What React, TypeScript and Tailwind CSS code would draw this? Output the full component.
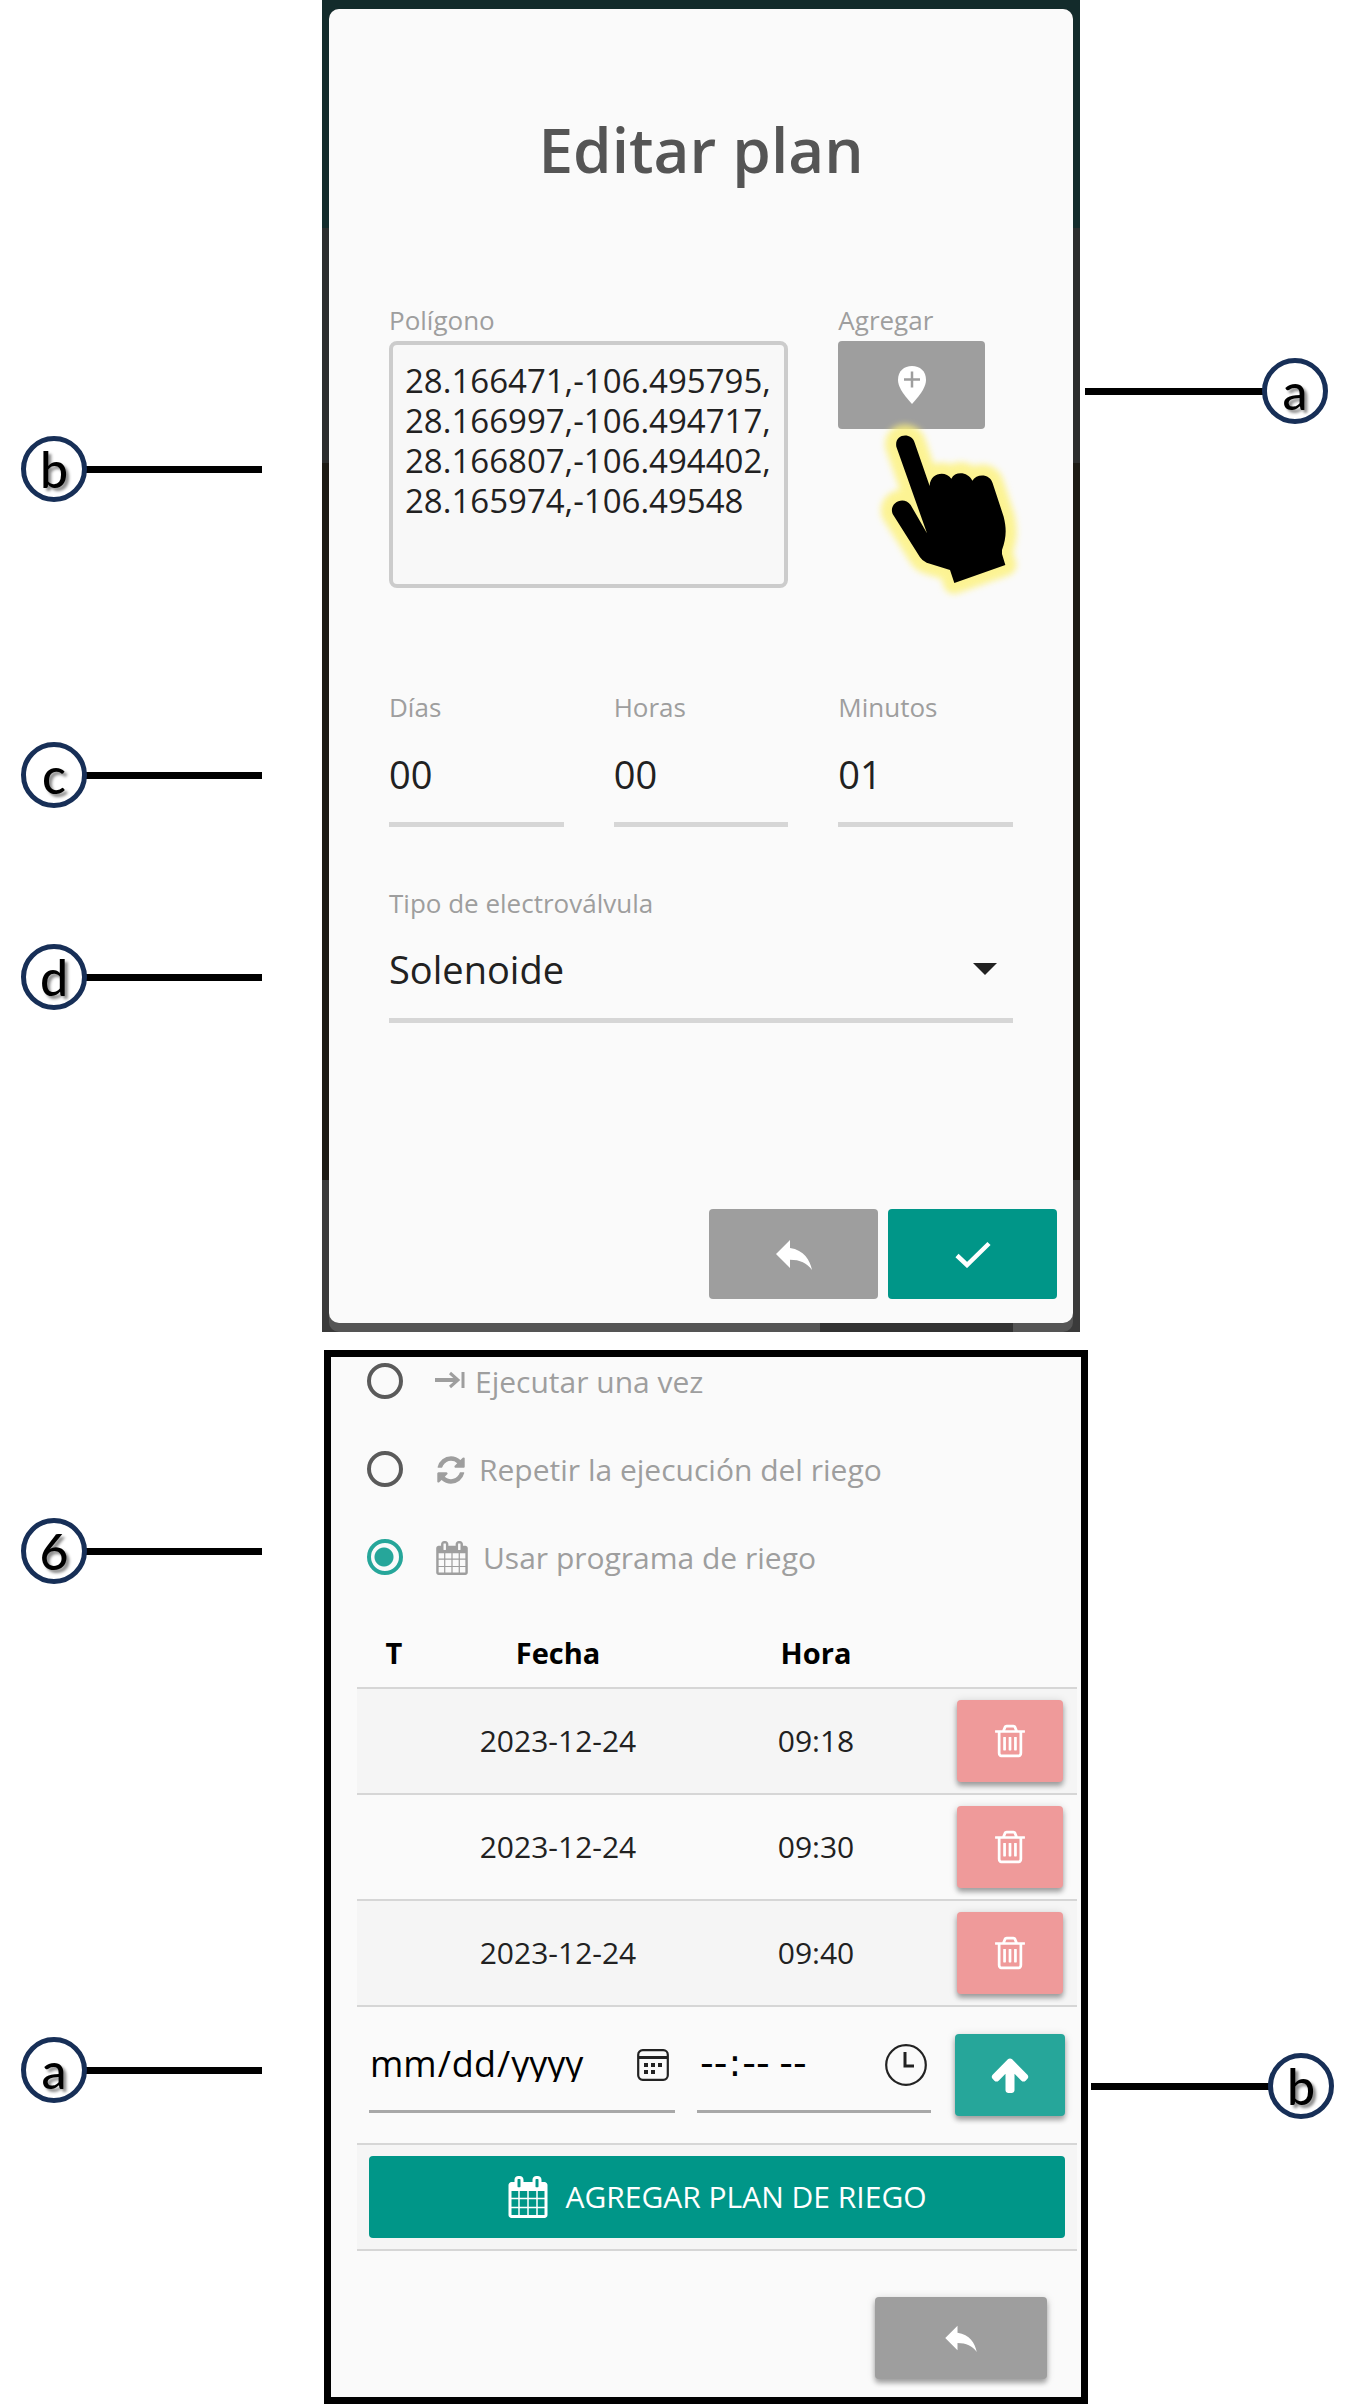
import React from "react";
import { MdReply } from "react-icons/md";

type IconProps = { className?: string };

function CalendarIcon({ className }: IconProps) {
  return (
    <svg viewBox="0 0 1792 1792" fill="currentColor" className={className} aria-hidden="true">
      <path d="M192 1664h288v-288h-288v288zm352 0h320v-288h-320v288zm-352-352h288v-320h-288v320zm352 0h320v-320h-320v320zm-352-384h288v-288h-288v288zm736 736h320v-288h-320v288zm-384-736h320v-288h-320v288zm768 736h288v-288h-288v288zm-384-352h320v-320h-320v320zm-352-864v-288q0-13-9.5-22.5t-22.5-9.5h-64q-13 0-22.5 9.5t-9.5 22.5v288q0 13 9.5 22.5t22.5 9.5h64q13 0 22.5-9.5t9.5-22.5zm736 864h288v-320h-288v320zm-384-384h320v-288h-320v288zm384 0h288v-288h-288v288zm32-480v-288q0-13-9.5-22.5t-22.5-9.5h-64q-13 0-22.5 9.5t-9.5 22.5v288q0 13 9.5 22.5t22.5 9.5h64q13 0 22.5-9.5t9.5-22.5zm384-64v1280q0 52-38 90t-90 38h-1408q-52 0-90-38t-38-90v-1280q0-52 38-90t90-38h128v-96q0-66 47-113t113-47h64q66 0 113 47t47 113v96h384v-96q0-66 47-113t113-47h64q66 0 113 47t47 113v96h128q52 0 90 38t38 90z" />
    </svg>
  );
}

function TrashIcon({ className }: IconProps) {
  return (
    <svg viewBox="0 0 1792 1792" fill="currentColor" className={className} aria-hidden="true">
      <path d="M704 736v576q0 14-9 23t-23 9h-64q-14 0-23-9t-9-23v-576q0-14 9-23t23-9h64q14 0 23 9t9 23zm256 0v576q0 14-9 23t-23 9h-64q-14 0-23-9t-9-23v-576q0-14 9-23t23-9h64q14 0 23 9t9 23zm256 0v576q0 14-9 23t-23 9h-64q-14 0-23-9t-9-23v-576q0-14 9-23t23-9h64q14 0 23 9t9 23zm128 724v-948h-896v948q0 22 7 40.5t14.5 27 10.5 8.5h832q3 0 10.5-8.5t14.5-27 7-40.5zm-672-1076h448l-48-117q-7-9-17-11h-317q-10 2-17 11zm928 32v64q0 14-9 23t-23 9h-96v948q0 83-47 143.5t-113 60.5h-832q-66 0-113-58.5t-47-141.5v-952h-96q-14 0-23-9t-9-23v-64q0-14 9-23t23-9h309l70-167q15-37 54-63t79-26h320q40 0 79 26t54 63l70 167h309q14 0 23 9t9 23z" />
    </svg>
  );
}

function RefreshIcon({ className }: IconProps) {
  return (
    <svg viewBox="0 0 1792 1792" fill="currentColor" className={className} aria-hidden="true">
      <path d="M1639 1056q0 5-1 7-64 268-268 434.5t-478 166.5q-146 0-282.5-55t-243.5-157l-129 129q-19 19-45 19t-45-19-19-45v-448q0-26 19-45t45-19h448q26 0 45 19t19 45-19 45l-137 137q71 66 161 102t187 36q134 0 250-65t186-179q11-17 53-117 8-23 30-23h192q13 0 22.5 9.5t9.5 22.5zm25-800v448q0 26-19 45t-45 19h-448q-26 0-45-19t-19-45 19-45l138-138q-148-137-349-137-134 0-250 65t-186 179q-11 17-53 117-8 23-30 23h-199q-13 0-22.5-9.5t-9.5-22.5v-7q65-268 270-434.5t480-166.5q146 0 284 55.5t245 156.5l130-129q19-19 45-19t45 19 19 45z" />
    </svg>
  );
}

function ArrowUpIcon({ className }: IconProps) {
  return (
    <svg viewBox="0 0 1792 1792" fill="currentColor" className={className} aria-hidden="true">
      <path d="M1675 971q0 51-37 90l-75 75q-38 38-91 38-54 0-90-38l-294-293v704q0 52-37.5 84.5t-90.5 32.5h-128q-53 0-90.5-32.5t-37.5-84.5v-704l-294 293q-36 38-90 38t-90-38l-75-75q-38-38-38-90 0-53 38-91l651-651q35-37 90-37 54 0 91 37l651 651q37 39 37 91z" />
    </svg>
  );
}

function ArrowToBarIcon({ className }: IconProps) {
  return (
    <svg viewBox="0 0 30 18" fill="none" stroke="currentColor" className={className} aria-hidden="true">
      <path d="M0 9h22" strokeWidth="4" />
      <path d="M15 2l8 7-8 7" strokeWidth="3" />
      <path d="M28 1v16" strokeWidth="3" />
    </svg>
  );
}

function CheckIcon({ className }: IconProps) {
  return (
    <svg viewBox="0 0 36 27" fill="none" stroke="currentColor" className={className} aria-hidden="true">
      <path d="M2 14.500L12 24 34 2.500" strokeWidth="4.500" />
    </svg>
  );
}

function PinPlusIcon({ className }: IconProps) {
  return (
    <svg viewBox="0 0 30 38" className={className} aria-hidden="true">
      <path d="M15 0C7 0 1 5 1 14c0 6 4 13 14 24 10-11 14-18 14-24C29 5 23 0 15 0z" fill="#fff" />
      <path d="M15 5.500v16M7 13.500h16" stroke="#9e9e9e" strokeWidth="2.500" />
    </svg>
  );
}

function DatePickerIcon({ className }: IconProps) {
  return (
    <svg viewBox="0 0 32 32" fill="none" stroke="#222" className={className} aria-hidden="true">
      <rect x="1.200" y="1.200" width="29.600" height="29.600" rx="4.500" strokeWidth="2.200" />
      <path d="M1 8.500h30" strokeWidth="3" />
      <path d="M7 16h4M14 16h4M21 16h4M7 23h4M14 23h4" strokeWidth="4" />
    </svg>
  );
}

function ClockIcon({ className }: IconProps) {
  return (
    <svg viewBox="0 0 42 42" fill="none" stroke="#222" className={className} aria-hidden="true">
      <circle cx="21" cy="21" r="19.800" strokeWidth="2.200" />
      <path d="M20 8v14h9" strokeWidth="3" />
    </svg>
  );
}

const handPath =
  "M229 380C222 340 275 335 284 368L329 498C330 460 375 450 394 476C405 452 445 455 457 482C470 460 510 460 518 490L551 590C561 630 558 655 546 690L546 702L556 735L403 789L390 750L320 728Q307 723 300 712L218 582C205 550 250 525 272 555L321 640Z";

function PointingHand({ className }: IconProps) {
  return (
    <svg viewBox="0 0 720 840" className={className} aria-hidden="true">
      <defs>
        <filter id="hand-glow" x="-20%" y="-20%" width="140%" height="140%">
          <feGaussianBlur stdDeviation="10" />
        </filter>
      </defs>
      <path d={handPath} fill="#fdf27a" stroke="#fdf27a" strokeWidth="66" strokeLinejoin="round" filter="url(#hand-glow)" opacity="0.8" />
      <path d={handPath} fill="#000" />
    </svg>
  );
}

function Callout({ label, side = "left" }: { label: string; side?: "left" | "right" }) {
  const row = side === "left" ? "flex items-center" : "flex flex-row-reverse items-center";
  return (
    <div className={row}>
      <div className="z-10 flex size-[66px] shrink-0 items-center justify-center rounded-full border-[5px] border-[#172f57] bg-white">
        <span className="font-['Lato',sans-serif] text-[50px] leading-none font-medium text-black [text-shadow:3px_3px_3px_rgba(0,0,0,0.45)]">
          {label}
        </span>
      </div>
      <div className={side === "left" ? "-ml-0.5 h-[7px] w-[177px] bg-black" : "-mr-0.5 h-[7px] w-[179px] bg-black"} />
    </div>
  );
}

function TimeField({ id, label, value }: { id: string; label: string; value: string }) {
  return (
    <div className="flex min-w-0 flex-col">
      <label htmlFor={id} className="text-[26px] leading-8 text-[#9e9e9e]">
        {label}
      </label>
      <input
        id={id}
        type="text"
        inputMode="numeric"
        defaultValue={value}
        className="h-[104px] w-full border-b-[5px] border-[#d6d6d6] bg-transparent pt-0.5 text-[38px] text-[#212121] outline-none"
      />
    </div>
  );
}

function EditPlanPanel() {
  return (
    <section className="bg-[linear-gradient(#132b2b_0_228px,#2b2d2d_228px_463px,#1c1a14_463px_1180px,#3a3a3a_1180px)] px-[7px] pt-[9px]">
      <div className="rounded-[10px] bg-[linear-gradient(90deg,#555_0_66%,#333_66%_92%,#555_92%)] pb-[9px]">
        <form className="rounded-[10px] bg-[#fafafa] pt-[104px] pb-6" onSubmit={(e) => e.preventDefault()}>
          <h1 className="text-center text-[62px] leading-[72px] font-semibold text-[#555]">Editar plan</h1>

          <div className="mt-[119px] grid grid-cols-3 gap-x-[50px] px-[60px]">
            <div className="col-span-2 flex flex-col gap-[5px]">
              <label htmlFor="poligono" className="text-[26px] leading-8 text-[#9e9e9e]">
                Polígono
              </label>
              <textarea
                id="poligono"
                className="h-[247px] w-full resize-none overflow-hidden rounded-lg border-4 border-[#cccccc] bg-[#f8f8f8] pt-4 pl-3 text-[33px] leading-10 text-[#212121] outline-none"
                defaultValue={"28.166471,-106.495795,\n28.166997,-106.494717,\n28.166807,-106.494402,\n28.165974,-106.49548"}
              />
            </div>
            <div className="relative flex flex-col gap-[5px]">
              <label htmlFor="agregar" className="text-[26px] leading-8 text-[#9e9e9e]">
                Agregar
              </label>
              <button
                id="agregar"
                type="button"
                aria-label="Agregar"
                className="flex h-[88px] w-[147px] items-center justify-center rounded bg-[#9e9e9e]"
              >
                <PinPlusIcon className="h-[38px] w-[30px]" />
              </button>
              <PointingHand className="pointer-events-none absolute top-4 -left-[18px] h-[280px] w-[240px]" />
            </div>
          </div>

          <div className="mt-[103px] grid grid-cols-3 gap-x-[50px] px-[60px]">
            <TimeField id="dias" label="Días" value="00" />
            <TimeField id="horas" label="Horas" value="00" />
            <TimeField id="minutos" label="Minutos" value="01" />
          </div>

          <div className="mt-[60px] flex flex-col px-[60px]">
            <label htmlFor="tipo" className="text-[26px] leading-8 text-[#9e9e9e]">
              Tipo de electroválvula
            </label>
            <div className="relative">
              <select
                id="tipo"
                defaultValue="Solenoide"
                className="block h-[104px] w-full appearance-none border-b-[5px] border-[#d6d6d6] bg-transparent pt-0.5 text-[38px] text-[#212121] outline-none"
              >
                <option>Solenoide</option>
              </select>
              <svg viewBox="0 0 24 12" className="pointer-events-none absolute top-11 right-4 h-3 w-6" aria-hidden="true">
                <path d="M0 0h24L12 12z" fill="#212121" />
              </svg>
            </div>
          </div>

          <div className="mt-[186px] flex justify-end gap-2.5 pr-4">
            <button type="button" aria-label="Regresar" className="flex h-[90px] w-[169px] items-center justify-center rounded bg-[#9e9e9e] text-white">
              <MdReply className="size-12" />
            </button>
            <button type="submit" aria-label="Guardar" className="flex h-[90px] w-[169px] items-center justify-center rounded bg-[#009688] text-white">
              <CheckIcon className="h-[27px] w-9" />
            </button>
          </div>
        </form>
      </div>
    </section>
  );
}

const modes = [
  { id: "once", text: "Ejecutar una vez", icon: <ArrowToBarIcon className="mb-1 h-[18px] w-[30px]" />, width: "w-10" },
  { id: "repeat", text: "Repetir la ejecución del riego", icon: <RefreshIcon className="size-8" />, width: "w-11" },
  { id: "program", text: "Usar programa de riego", icon: <CalendarIcon className="size-[34px]" />, width: "w-12" },
];

const schedule = [
  { date: "2023-12-24", time: "09:18" },
  { date: "2023-12-24", time: "09:30" },
  { date: "2023-12-24", time: "09:40" },
];

const raised = "shadow-[0_4px_5px_rgba(0,0,0,0.3),0_1px_8px_rgba(0,0,0,0.15)]";

function SchedulePanel() {
  return (
    <form className="border-[7px] border-black bg-[#fafafa] pt-1.5 pr-1 pb-[18px] pl-[26px]" onSubmit={(e) => e.preventDefault()}>
      <fieldset className="flex flex-col gap-[52px] pl-2.5">
        {modes.map((m) => (
          <div key={m.id} className="flex h-9 items-center">
            <input
              id={m.id}
              type="radio"
              name="mode"
              defaultChecked={m.id === "program"}
              className="size-9 shrink-0 appearance-none rounded-full border-4 border-[#5a5a5a] checked:border-[#26a69a] checked:bg-[radial-gradient(circle_at_13px_14px,#26a69a_0_9px,transparent_10px)]"
            />
            <label htmlFor={m.id} className="ml-8 flex items-center pt-0.5 text-[30px] leading-9 text-[#9e9e9e]">
              <span className={m.width}>{m.icon}</span>
              {m.text}
            </label>
          </div>
        ))}
      </fieldset>

      <table className="mt-11 w-full table-fixed border-collapse text-center text-[30px] leading-9 text-[#212121]">
        <colgroup>
          <col className="w-[74px]" />
          <col className="w-[254px]" />
          <col />
          <col className="w-[130px]" />
        </colgroup>
        <thead>
          <tr className="h-[69px] border-b-2 border-[#d6d6d6] text-[29px] text-black">
            <th>T</th>
            <th>Fecha</th>
            <th>Hora</th>
            <th />
          </tr>
        </thead>
        <tbody>
          {schedule.map((s) => (
            <tr key={s.time} className="h-[106px] border-b-2 border-[#d6d6d6] odd:bg-[#f5f5f5]">
              <td />
              <td>{s.date}</td>
              <td>{s.time}</td>
              <td className="pr-3.5 pl-2.5">
                <button
                  type="button"
                  aria-label={`Eliminar ${s.time}`}
                  className={`flex h-[82px] w-full items-center justify-center rounded bg-[#ef9a9a] text-white ${raised}`}
                >
                  <TrashIcon className="size-[38px]" />
                </button>
              </td>
            </tr>
          ))}
          <tr className="h-[138px] border-b-2 border-[#d6d6d6]">
            <td colSpan={2} className="pt-2 pr-2.5 pl-3 align-top">
              <div className="relative">
                <input
                  type="date"
                  aria-label="Fecha"
                  className="h-[98px] w-full border-b-[3px] border-[#a8a8a8] bg-transparent pt-0.5 text-[36px] text-black outline-none [&::-webkit-calendar-picker-indicator]:opacity-0"
                />
                <DatePickerIcon className="pointer-events-none absolute top-[34px] right-1.5 size-8" />
              </div>
            </td>
            <td className="pt-2 pr-4 pl-3 align-top">
              <div className="relative">
                <input
                  type="time"
                  aria-label="Hora"
                  className="h-[98px] w-full border-b-[3px] border-[#a8a8a8] bg-transparent pt-0.5 pl-0.5 font-['DejaVu_Sans',sans-serif] text-[38px] text-black outline-none [&::-webkit-calendar-picker-indicator]:opacity-0"
                />
                <ClockIcon className="pointer-events-none absolute top-[29px] right-1 size-[42px]" />
              </div>
            </td>
            <td className="pr-3 pl-2">
              <button
                type="button"
                aria-label="Subir fecha y hora"
                className={`flex h-[82px] w-full items-center justify-center rounded bg-[#26a69a] text-white ${raised}`}
              >
                <ArrowUpIcon className="size-[42px]" />
              </button>
            </td>
          </tr>
          <tr className="h-[106px] border-b-2 border-[#d6d6d6] bg-[#f5f5f5]">
            <td colSpan={4} className="px-3">
              <button type="submit" className="flex h-[82px] w-full items-center justify-center gap-4 rounded bg-[#009688] text-[30px] text-white">
                <CalendarIcon className="size-[42px]" />
                AGREGAR PLAN DE RIEGO
              </button>
            </td>
          </tr>
        </tbody>
      </table>

      <div className="mt-[46px] flex justify-end pr-[30px]">
        <button
          type="button"
          aria-label="Regresar"
          className={`flex h-[82px] w-[172px] items-center justify-center rounded bg-[#9e9e9e] text-white ${raised}`}
        >
          <MdReply className="size-[42px]" />
        </button>
      </div>
    </form>
  );
}

export default function App() {
  return (
    <main className="flex flex-col gap-[18px] bg-white font-['Open_Sans','Noto_Sans',sans-serif]">
      <div className="grid grid-cols-[322fr_758fr_276fr]">
        <aside className="flex flex-col pt-[436px] pl-[21px]">
          <Callout label="b" />
          <div className="mt-60">
            <Callout label="c" />
          </div>
          <div className="mt-[136px]">
            <Callout label="d" />
          </div>
        </aside>
        <EditPlanPanel />
        <aside className="pt-[358px] pr-7">
          <Callout label="a" side="right" />
        </aside>
      </div>
      <div className="grid grid-cols-[324fr_764fr_268fr]">
        <aside className="flex flex-col pt-[168px] pl-[21px]">
          <Callout label="6" />
          <div className="mt-[453px]">
            <Callout label="a" />
          </div>
        </aside>
        <SchedulePanel />
        <aside className="pt-[703px] pr-[22px]">
          <Callout label="b" side="right" />
        </aside>
      </div>
    </main>
  );
}
